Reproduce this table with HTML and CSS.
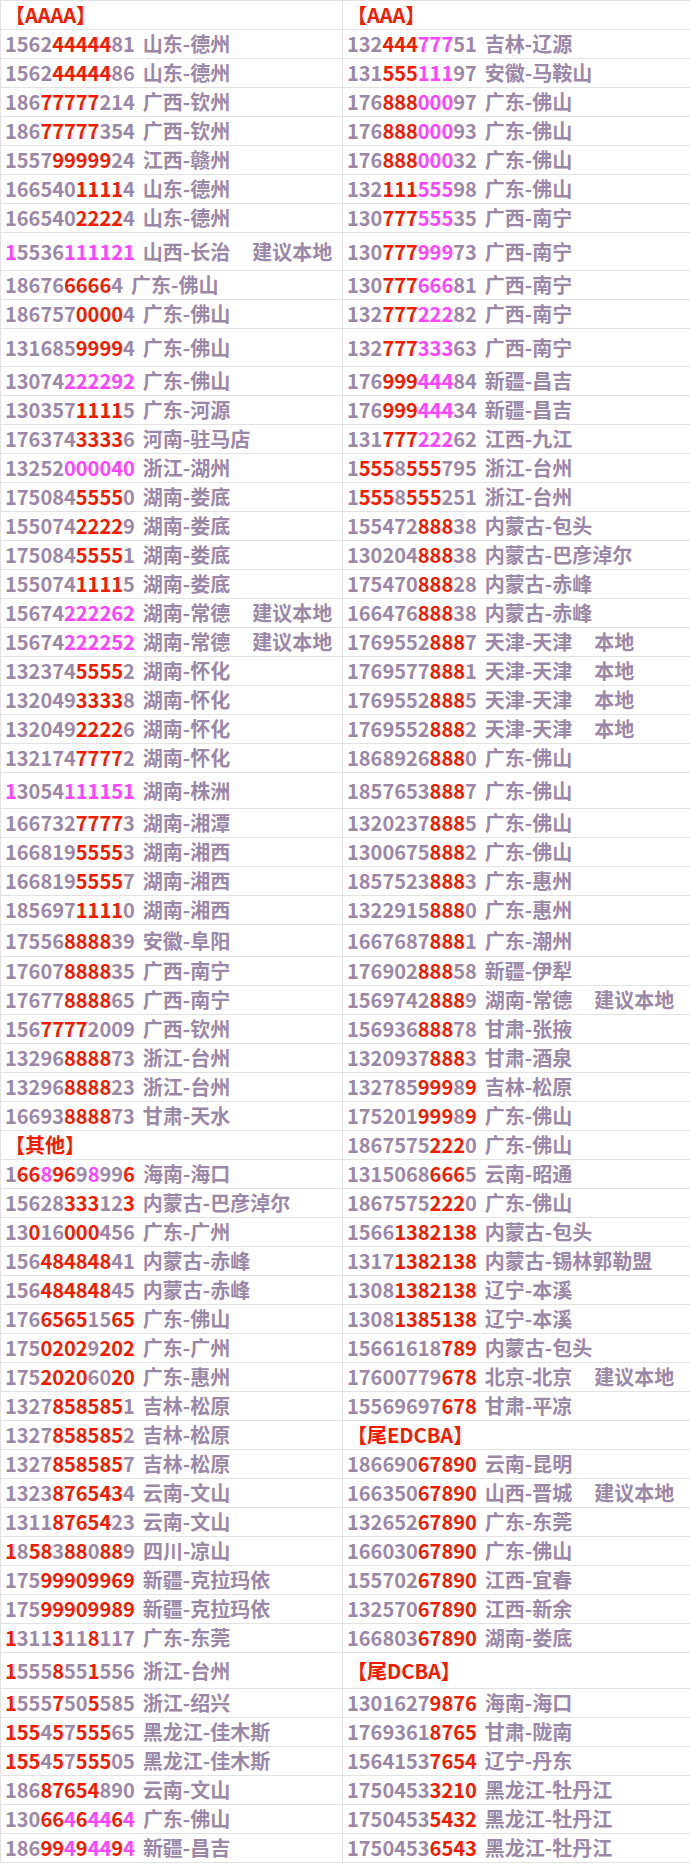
FILE: index.html
```html
<!DOCTYPE html>
<html lang="zh">
<head>
<meta charset="utf-8">
<link rel="stylesheet" href="styles.css">
</head>
<body>
<table class="sheet">
<colgroup><col class="c1"><col class="c2"></colgroup>
<tr><td><span class="hd">【AAAA】</span></td><td><span class="hd">【AAA】</span></td></tr>
<tr><td><span class="n">1562<span class="r">44444</span>81</span><span class="loc">山东-德州</span></td><td><span class="n">132<span class="r">444</span><span class="m">777</span>51</span><span class="loc">吉林-辽源</span></td></tr>
<tr><td><span class="n">1562<span class="r">44444</span>86</span><span class="loc">山东-德州</span></td><td><span class="n">131<span class="r">555</span><span class="m">111</span>97</span><span class="loc">安徽-马鞍山</span></td></tr>
<tr><td><span class="n">186<span class="r">77777</span>214</span><span class="loc">广西-钦州</span></td><td><span class="n">176<span class="r">888</span><span class="m">000</span>97</span><span class="loc">广东-佛山</span></td></tr>
<tr><td><span class="n">186<span class="r">77777</span>354</span><span class="loc">广西-钦州</span></td><td><span class="n">176<span class="r">888</span><span class="m">000</span>93</span><span class="loc">广东-佛山</span></td></tr>
<tr><td><span class="n">1557<span class="r">99999</span>24</span><span class="loc">江西-赣州</span></td><td><span class="n">176<span class="r">888</span><span class="m">000</span>32</span><span class="loc">广东-佛山</span></td></tr>
<tr><td><span class="n">166540<span class="r">1111</span>4</span><span class="loc">山东-德州</span></td><td><span class="n">132<span class="r">111</span><span class="m">555</span>98</span><span class="loc">广东-佛山</span></td></tr>
<tr><td><span class="n">166540<span class="r">2222</span>4</span><span class="loc">山东-德州</span></td><td><span class="n">130<span class="r">777</span><span class="m">555</span>35</span><span class="loc">广西-南宁</span></td></tr>
<tr class="t38"><td><span class="n"><span class="m">1</span>5536<span class="m">111121</span></span><span class="loc">山西-长治</span><span class="note">建议本地</span></td><td><span class="n">130<span class="r">777</span><span class="m">999</span>73</span><span class="loc">广西-南宁</span></td></tr>
<tr><td><span class="n">18676<span class="r">6666</span>4</span><span class="loc">广东-佛山</span></td><td><span class="n">130<span class="r">777</span><span class="m">666</span>81</span><span class="loc">广西-南宁</span></td></tr>
<tr><td><span class="n">186757<span class="r">0000</span>4</span><span class="loc">广东-佛山</span></td><td><span class="n">132<span class="r">777</span><span class="m">222</span>82</span><span class="loc">广西-南宁</span></td></tr>
<tr class="t38"><td><span class="n">131685<span class="r">9999</span>4</span><span class="loc">广东-佛山</span></td><td><span class="n">132<span class="r">777</span><span class="m">333</span>63</span><span class="loc">广西-南宁</span></td></tr>
<tr><td><span class="n">13074<span class="m">222292</span></span><span class="loc">广东-佛山</span></td><td><span class="n">176<span class="r">999</span><span class="m">444</span>84</span><span class="loc">新疆-昌吉</span></td></tr>
<tr><td><span class="n">130357<span class="r">1111</span>5</span><span class="loc">广东-河源</span></td><td><span class="n">176<span class="r">999</span><span class="m">444</span>34</span><span class="loc">新疆-昌吉</span></td></tr>
<tr><td><span class="n">176374<span class="r">3333</span>6</span><span class="loc">河南-驻马店</span></td><td><span class="n">131<span class="r">777</span><span class="m">222</span>62</span><span class="loc">江西-九江</span></td></tr>
<tr><td><span class="n">13252<span class="m">000040</span></span><span class="loc">浙江-湖州</span></td><td><span class="n">1<span class="r">555</span>8<span class="r">555</span>795</span><span class="loc">浙江-台州</span></td></tr>
<tr><td><span class="n">175084<span class="r">5555</span>0</span><span class="loc">湖南-娄底</span></td><td><span class="n">1<span class="r">555</span>8<span class="r">555</span>251</span><span class="loc">浙江-台州</span></td></tr>
<tr><td><span class="n">155074<span class="r">2222</span>9</span><span class="loc">湖南-娄底</span></td><td><span class="n">155472<span class="r">888</span>38</span><span class="loc">内蒙古-包头</span></td></tr>
<tr><td><span class="n">175084<span class="r">5555</span>1</span><span class="loc">湖南-娄底</span></td><td><span class="n">130204<span class="r">888</span>38</span><span class="loc">内蒙古-巴彦淖尔</span></td></tr>
<tr><td><span class="n">155074<span class="r">1111</span>5</span><span class="loc">湖南-娄底</span></td><td><span class="n">175470<span class="r">888</span>28</span><span class="loc">内蒙古-赤峰</span></td></tr>
<tr><td><span class="n">15674<span class="m">222262</span></span><span class="loc">湖南-常德</span><span class="note">建议本地</span></td><td><span class="n">166476<span class="r">888</span>38</span><span class="loc">内蒙古-赤峰</span></td></tr>
<tr><td><span class="n">15674<span class="m">222252</span></span><span class="loc">湖南-常德</span><span class="note">建议本地</span></td><td><span class="n">1769552<span class="r">888</span>7</span><span class="loc">天津-天津</span><span class="note">本地</span></td></tr>
<tr><td><span class="n">132374<span class="r">5555</span>2</span><span class="loc">湖南-怀化</span></td><td><span class="n">1769577<span class="r">888</span>1</span><span class="loc">天津-天津</span><span class="note">本地</span></td></tr>
<tr><td><span class="n">132049<span class="r">3333</span>8</span><span class="loc">湖南-怀化</span></td><td><span class="n">1769552<span class="r">888</span>5</span><span class="loc">天津-天津</span><span class="note">本地</span></td></tr>
<tr><td><span class="n">132049<span class="r">2222</span>6</span><span class="loc">湖南-怀化</span></td><td><span class="n">1769552<span class="r">888</span>2</span><span class="loc">天津-天津</span><span class="note">本地</span></td></tr>
<tr><td><span class="n">132174<span class="r">7777</span>2</span><span class="loc">湖南-怀化</span></td><td><span class="n">1868926<span class="r">888</span>0</span><span class="loc">广东-佛山</span></td></tr>
<tr class="t36"><td><span class="n"><span class="m">1</span>3054<span class="m">111151</span></span><span class="loc">湖南-株洲</span></td><td><span class="n">1857653<span class="r">888</span>7</span><span class="loc">广东-佛山</span></td></tr>
<tr><td><span class="n">166732<span class="r">7777</span>3</span><span class="loc">湖南-湘潭</span></td><td><span class="n">1320237<span class="r">888</span>5</span><span class="loc">广东-佛山</span></td></tr>
<tr><td><span class="n">166819<span class="r">5555</span>3</span><span class="loc">湖南-湘西</span></td><td><span class="n">1300675<span class="r">888</span>2</span><span class="loc">广东-佛山</span></td></tr>
<tr><td><span class="n">166819<span class="r">5555</span>7</span><span class="loc">湖南-湘西</span></td><td><span class="n">1857523<span class="r">888</span>3</span><span class="loc">广东-惠州</span></td></tr>
<tr><td><span class="n">185697<span class="r">1111</span>0</span><span class="loc">湖南-湘西</span></td><td><span class="n">1322915<span class="r">888</span>0</span><span class="loc">广东-惠州</span></td></tr>
<tr class="t32"><td><span class="n">17556<span class="r">8888</span>39</span><span class="loc">安徽-阜阳</span></td><td><span class="n">1667687<span class="r">888</span>1</span><span class="loc">广东-潮州</span></td></tr>
<tr><td><span class="n">17607<span class="r">8888</span>35</span><span class="loc">广西-南宁</span></td><td><span class="n">176902<span class="r">888</span>58</span><span class="loc">新疆-伊犁</span></td></tr>
<tr><td><span class="n">17677<span class="r">8888</span>65</span><span class="loc">广西-南宁</span></td><td><span class="n">1569742<span class="r">888</span>9</span><span class="loc">湖南-常德</span><span class="note">建议本地</span></td></tr>
<tr><td><span class="n">156<span class="r">7777</span>2009</span><span class="loc">广西-钦州</span></td><td><span class="n">156936<span class="r">888</span>78</span><span class="loc">甘肃-张掖</span></td></tr>
<tr><td><span class="n">13296<span class="r">8888</span>73</span><span class="loc">浙江-台州</span></td><td><span class="n">1320937<span class="r">888</span>3</span><span class="loc">甘肃-酒泉</span></td></tr>
<tr><td><span class="n">13296<span class="r">8888</span>23</span><span class="loc">浙江-台州</span></td><td><span class="n">132785<span class="r">999</span>8<span class="r">9</span></span><span class="loc">吉林-松原</span></td></tr>
<tr><td><span class="n">16693<span class="r">8888</span>73</span><span class="loc">甘肃-天水</span></td><td><span class="n">175201<span class="r">999</span>8<span class="r">9</span></span><span class="loc">广东-佛山</span></td></tr>
<tr><td><span class="hd">【其他】</span></td><td><span class="n">1867575<span class="r">222</span>0</span><span class="loc">广东-佛山</span></td></tr>
<tr><td><span class="n">1<span class="r">66</span><span class="m">8</span><span class="r">96</span>9<span class="m">8</span>99<span class="r">6</span></span><span class="loc">海南-海口</span></td><td><span class="n">1315068<span class="r">666</span>5</span><span class="loc">云南-昭通</span></td></tr>
<tr><td><span class="n">15628<span class="r">333</span>12<span class="r">3</span></span><span class="loc">内蒙古-巴彦淖尔</span></td><td><span class="n">1867575<span class="r">222</span>0</span><span class="loc">广东-佛山</span></td></tr>
<tr><td><span class="n">13<span class="r">0</span>16<span class="r">000</span>456</span><span class="loc">广东-广州</span></td><td><span class="n">1566<span class="r">1382138</span></span><span class="loc">内蒙古-包头</span></td></tr>
<tr><td><span class="n">156<span class="r">484848</span>41</span><span class="loc">内蒙古-赤峰</span></td><td><span class="n">1317<span class="r">1382138</span></span><span class="loc">内蒙古-锡林郭勒盟</span></td></tr>
<tr><td><span class="n">156<span class="r">484848</span>45</span><span class="loc">内蒙古-赤峰</span></td><td><span class="n">1308<span class="r">1382138</span></span><span class="loc">辽宁-本溪</span></td></tr>
<tr><td><span class="n">176<span class="r">6565</span>15<span class="r">65</span></span><span class="loc">广东-佛山</span></td><td><span class="n">1308<span class="r">1385138</span></span><span class="loc">辽宁-本溪</span></td></tr>
<tr><td><span class="n">175<span class="r">0202</span>9<span class="r">202</span></span><span class="loc">广东-广州</span></td><td><span class="n">15661618<span class="r">789</span></span><span class="loc">内蒙古-包头</span></td></tr>
<tr><td><span class="n">175<span class="r">2020</span>60<span class="r">20</span></span><span class="loc">广东-惠州</span></td><td><span class="n">17600779<span class="r">678</span></span><span class="loc">北京-北京</span><span class="note">建议本地</span></td></tr>
<tr><td><span class="n">1327<span class="r">858585</span>1</span><span class="loc">吉林-松原</span></td><td><span class="n">15569697<span class="r">678</span></span><span class="loc">甘肃-平凉</span></td></tr>
<tr><td><span class="n">1327<span class="r">858585</span>2</span><span class="loc">吉林-松原</span></td><td><span class="hd">【尾EDCBA】</span></td></tr>
<tr><td><span class="n">1327<span class="r">858585</span>7</span><span class="loc">吉林-松原</span></td><td><span class="n">186690<span class="r">67890</span></span><span class="loc">云南-昆明</span></td></tr>
<tr><td><span class="n">1323<span class="r">876543</span>4</span><span class="loc">云南-文山</span></td><td><span class="n">166350<span class="r">67890</span></span><span class="loc">山西-晋城</span><span class="note">建议本地</span></td></tr>
<tr><td><span class="n">1311<span class="r">87654</span>23</span><span class="loc">云南-文山</span></td><td><span class="n">132652<span class="r">67890</span></span><span class="loc">广东-东莞</span></td></tr>
<tr><td><span class="n"><span class="r">1</span>8<span class="r">58</span>3<span class="r">88</span>0<span class="r">88</span>9</span><span class="loc">四川-凉山</span></td><td><span class="n">166030<span class="r">67890</span></span><span class="loc">广东-佛山</span></td></tr>
<tr><td><span class="n">175<span class="r">99909969</span></span><span class="loc">新疆-克拉玛依</span></td><td><span class="n">155702<span class="r">67890</span></span><span class="loc">江西-宜春</span></td></tr>
<tr><td><span class="n">175<span class="r">99909989</span></span><span class="loc">新疆-克拉玛依</span></td><td><span class="n">132570<span class="r">67890</span></span><span class="loc">江西-新余</span></td></tr>
<tr><td><span class="n"><span class="r">1</span>311<span class="r">3</span>11<span class="r">8</span>117</span><span class="loc">广东-东莞</span></td><td><span class="n">166803<span class="r">67890</span></span><span class="loc">湖南-娄底</span></td></tr>
<tr class="t36"><td><span class="n"><span class="r">1</span>555<span class="r">8</span>55<span class="r">1</span>556</span><span class="loc">浙江-台州</span></td><td><span class="hd">【尾DCBA】</span></td></tr>
<tr><td><span class="n"><span class="r">1</span>555<span class="r">7</span>50<span class="r">5</span>585</span><span class="loc">浙江-绍兴</span></td><td><span class="n">1301627<span class="r">9876</span></span><span class="loc">海南-海口</span></td></tr>
<tr><td><span class="n"><span class="r">155</span>4<span class="r">5</span>7<span class="r">555</span>65</span><span class="loc">黑龙江-佳木斯</span></td><td><span class="n">1769361<span class="r">8765</span></span><span class="loc">甘肃-陇南</span></td></tr>
<tr><td><span class="n"><span class="r">155</span>4<span class="r">5</span>7<span class="r">555</span>05</span><span class="loc">黑龙江-佳木斯</span></td><td><span class="n">1564153<span class="r">7654</span></span><span class="loc">辽宁-丹东</span></td></tr>
<tr><td><span class="n">186<span class="r">87654</span>890</span><span class="loc">云南-文山</span></td><td><span class="n">1750453<span class="r">3210</span></span><span class="loc">黑龙江-牡丹江</span></td></tr>
<tr><td><span class="n">130<span class="r">66</span><span class="m">4</span><span class="r">6</span><span class="m">44</span><span class="r">6</span><span class="m">4</span></span><span class="loc">广东-佛山</span></td><td><span class="n">1750453<span class="r">5432</span></span><span class="loc">黑龙江-牡丹江</span></td></tr>
<tr><td><span class="n">186<span class="r">99</span><span class="m">4</span><span class="r">9</span><span class="m">44</span><span class="r">9</span><span class="m">4</span></span><span class="loc">新疆-昌吉</span></td><td><span class="n">1750453<span class="r">6543</span></span><span class="loc">黑龙江-牡丹江</span></td></tr>
</table>
</body>
</html>
```

FILE: styles.css
```css
html, body {
  margin: 0;
  padding: 0;
  background: #ffffff;
}

.sheet {
  border-collapse: collapse;
  width: 690px;
  table-layout: fixed;
  font-family: "Noto Sans CJK SC", "Noto Sans", sans-serif;
  font-size: 20px;
  font-weight: bold;
  color: #9b87a8;
}

.c1 { width: 342px; }
.c2 { width: 348px; }

.sheet td {
  border: 1px solid #e2e2e2;
  height: 28px;
  padding: 0 4px;
  line-height: 22px;
  white-space: nowrap;
  vertical-align: middle;
}

.sheet tr.t38 td { height: 37px; }
.sheet tr.t36 td { height: 35px; }
.sheet tr.t32 td { height: 31px; }

.n {
  letter-spacing: 0;
}

.r { color: #f41a00; }
.m { color: #ff44ff; }

.loc { margin-left: 8px; }
.note { margin-left: 22px; }

.hd {
  color: #f41a00;
}
```
